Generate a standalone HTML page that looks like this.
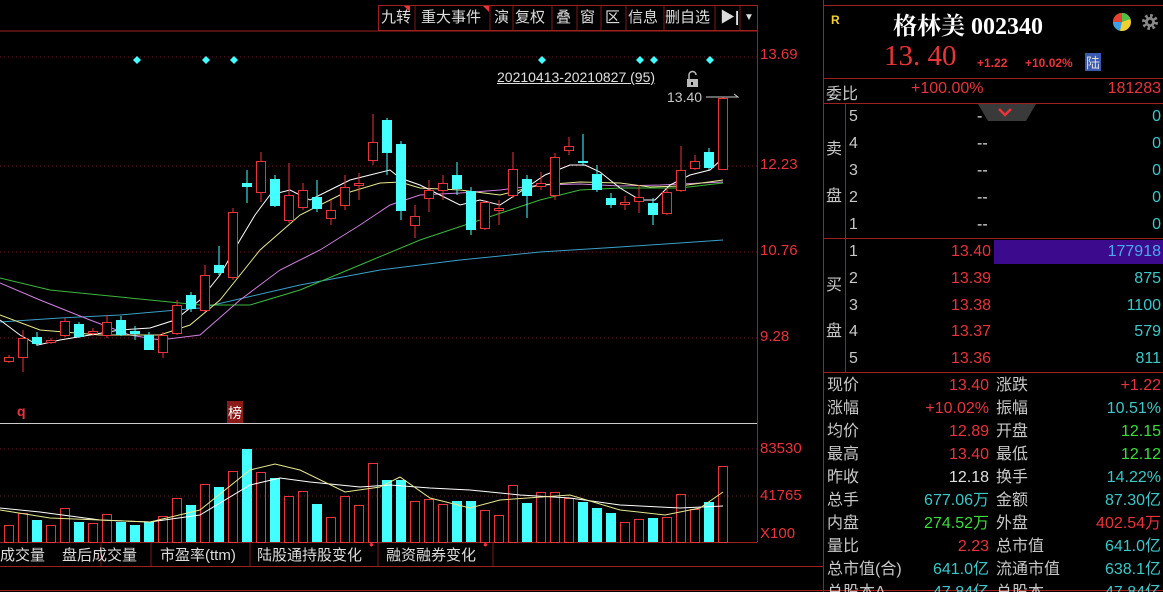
<!DOCTYPE html>
<html style="overflow:hidden;height:592px"><head><meta charset="utf-8">
<style>
html,body{overflow:hidden}
body{margin:0;width:1163px;height:592px;background:#000;overflow:hidden;position:relative;font-family:"Liberation Sans","Noto Sans CJK SC",sans-serif;}
.a{position:absolute;white-space:nowrap;}
.r{color:#e8343a}.c{color:#3cc8c8}.w{color:#e0e0e0}.g{color:#3ddc3d}.gr{color:#c8c8c8}
.tb{position:absolute;top:5px;height:25px;font-size:15px;color:#ddd;line-height:25px;}
</style></head><body>
<svg width="1163" height="592" style="position:absolute;left:0;top:0">
<line x1="0" y1="31" x2="757" y2="31" stroke="#a0201e"/>
<rect x="378.5" y="5.5" width="379" height="25" fill="none" stroke="#a0201e"/>
<g stroke="#7a1a18"><line x1="415" y1="6" x2="415" y2="30"/><line x1="490" y1="6" x2="490" y2="30"/><line x1="513" y1="6" x2="513" y2="30"/><line x1="552" y1="6" x2="552" y2="30"/><line x1="577" y1="6" x2="577" y2="30"/><line x1="601" y1="6" x2="601" y2="30"/><line x1="626" y1="6" x2="626" y2="30"/><line x1="664" y1="6" x2="664" y2="30"/><line x1="715" y1="6" x2="715" y2="30"/><line x1="740" y1="6" x2="740" y2="30"/></g>
<polygon points="404,6 410,6 410,12" fill="#e8343a"/><polygon points="483,6 489,6 489,12" fill="#e8343a"/>
<line x1="757.5" y1="31" x2="757.5" y2="542" stroke="#a0201e"/>
<g stroke="#6a1a18" stroke-dasharray="1,3"><line x1="0" y1="57" x2="757" y2="57"/><line x1="0" y1="166" x2="757" y2="166"/><line x1="0" y1="252" x2="757" y2="252"/><line x1="0" y1="338" x2="757" y2="338"/><line x1="0" y1="449" x2="757" y2="449"/><line x1="0" y1="496" x2="757" y2="496"/></g>
<line x1="0" y1="423.5" x2="757" y2="423.5" stroke="#ccc"/>
<line x1="0" y1="542.5" x2="757" y2="542.5" stroke="#a0201e"/>
<line x1="0" y1="566.5" x2="823" y2="566.5" stroke="#a0201e"/>
<line x1="0" y1="590.5" x2="1163" y2="590.5" stroke="#a0201e"/>
<line x1="823.5" y1="0" x2="823.5" y2="592" stroke="#a0201e"/>
<line x1="823" y1="5.5" x2="1163" y2="5.5" stroke="#a0201e"/>
<line x1="823" y1="78.5" x2="1163" y2="78.5" stroke="#a0201e"/>
<line x1="823" y1="103.5" x2="1163" y2="103.5" stroke="#a0201e"/>
<line x1="823" y1="238.5" x2="1163" y2="238.5" stroke="#a0201e"/>
<line x1="823" y1="372.5" x2="1163" y2="372.5" stroke="#a0201e"/>
<line x1="845.5" y1="103" x2="845.5" y2="372" stroke="#a0201e"/>
<g stroke="#7a1a18"><line x1="101" y1="543" x2="101" y2="566"/><line x1="151" y1="543" x2="151" y2="566"/><line x1="250" y1="543" x2="250" y2="566"/><line x1="378" y1="543" x2="378" y2="566"/><line x1="493" y1="543" x2="493" y2="566"/></g>
<rect x="994" y="240" width="169" height="24" fill="#3c0a8c"/>
<polygon points="978,104 1036,104 1026,121 988,121" fill="#3a3a3a"/>
<polyline points="999,109 1005,115 1011,109" fill="none" stroke="#e8343a" stroke-width="2.5"/>
<g fill="#4ff">
<polygon points="137,56 141,60 137,64 133,60"/><polygon points="206,56 210,60 206,64 202,60"/><polygon points="234,56 238,60 234,64 230,60"/><polygon points="542,56 546,60 542,64 538,60"/><polygon points="640,56 644,60 640,64 636,60"/><polygon points="654,56 658,60 654,64 650,60"/><polygon points="710,56 714,60 710,64 706,60"/></g>
<g fill="none" stroke-width="1">
<polyline stroke="#3aa0c8" points="0,322 60,318 120,315 200,308 300,285 380,270 460,260 540,252 620,247 680,243 723,240"/>
<polyline stroke="#3cb83c" points="0,278 50,290 100,295 150,300 200,305 250,305 300,290 360,265 420,240 480,220 540,200 580,190 620,188 680,188 723,183"/>
<polyline stroke="#d080e0" points="0,283 40,300 90,320 130,335 160,340 200,335 240,300 280,270 320,250 360,225 390,205 420,195 460,193 500,190 540,185 580,184 620,186 660,185 723,182"/>
<polyline stroke="#e8e890" points="0,315 40,330 100,335 160,335 190,325 220,300 260,250 300,215 340,195 380,183 400,182 420,188 460,190 500,195 540,185 580,182 620,183 650,187 680,186 723,180"/>
<polyline stroke="#fff" points="0,320 20,335 38,345 60,340 90,335 120,330 150,328 175,320 200,300 220,275 240,240 255,215 270,195 290,190 310,200 330,190 350,180 370,175 390,170 400,178 420,185 440,195 460,205 480,200 500,205 520,192 545,175 570,165 585,165 600,172 620,188 640,200 655,200 670,185 690,175 710,170 723,158"/>
</g>
<g stroke="#e8343a" fill="#000">
<line x1="9" y1="355" x2="9" y2="363"/><rect x="4.5" y="357.5" width="9" height="4"/>
<line x1="23" y1="330" x2="23" y2="372"/><rect x="18.5" y="338.5" width="9" height="19"/>
<line x1="51" y1="338" x2="51" y2="344"/><rect x="46.5" y="340.5" width="9" height="2"/>
<line x1="65" y1="318" x2="65" y2="337"/><rect x="60.5" y="321.5" width="9" height="14"/>
<line x1="93" y1="328" x2="93" y2="336"/><rect x="88.5" y="331.5" width="9" height="2"/>
<line x1="107" y1="315" x2="107" y2="338"/><rect x="102.5" y="322.5" width="9" height="13"/>
<line x1="163" y1="332" x2="163" y2="358"/><rect x="158.5" y="335.5" width="9" height="17"/>
<line x1="177" y1="300" x2="177" y2="335"/><rect x="172.5" y="305.5" width="9" height="28"/>
<line x1="205" y1="265" x2="205" y2="312"/><rect x="200.5" y="275.5" width="9" height="35"/>
<line x1="233" y1="208" x2="233" y2="280"/><rect x="228.5" y="212.5" width="9" height="65"/>
<line x1="261" y1="152" x2="261" y2="202"/><rect x="256.5" y="161.5" width="9" height="31"/>
<line x1="289" y1="163" x2="289" y2="223"/><rect x="284.5" y="195.5" width="9" height="25"/>
<line x1="303" y1="183" x2="303" y2="210"/><rect x="298.5" y="190.5" width="9" height="17"/>
<line x1="331" y1="200" x2="331" y2="225"/><rect x="326.5" y="210.5" width="9" height="8"/>
<line x1="345" y1="175" x2="345" y2="210"/><rect x="340.5" y="187.5" width="9" height="18"/>
<line x1="359" y1="173" x2="359" y2="200"/><rect x="354.5" y="183.5" width="9" height="2"/>
<line x1="373" y1="114" x2="373" y2="165"/><rect x="368.5" y="142.5" width="9" height="18"/>
<line x1="415" y1="205" x2="415" y2="238"/><rect x="410.5" y="216.5" width="9" height="9"/>
<line x1="429" y1="180" x2="429" y2="212"/><rect x="424.5" y="190.5" width="9" height="8"/>
<line x1="443" y1="175" x2="443" y2="200"/><rect x="438.5" y="183.5" width="9" height="7"/>
<line x1="485" y1="200" x2="485" y2="230"/><rect x="480.5" y="202.5" width="9" height="26"/>
<line x1="499" y1="200" x2="499" y2="225"/><rect x="494.5" y="208.5" width="9" height="2"/>
<line x1="513" y1="152" x2="513" y2="198"/><rect x="508.5" y="169.5" width="9" height="26"/>
<line x1="541" y1="172" x2="541" y2="190"/><rect x="536.5" y="183.5" width="9" height="3"/>
<line x1="555" y1="153" x2="555" y2="200"/><rect x="550.5" y="157.5" width="9" height="38"/>
<line x1="569" y1="137" x2="569" y2="155"/><rect x="564.5" y="146.5" width="9" height="4"/>
<line x1="625" y1="196" x2="625" y2="210"/><rect x="620.5" y="202.5" width="9" height="2"/>
<line x1="639" y1="185" x2="639" y2="213"/><rect x="634.5" y="197.5" width="9" height="4"/>
<line x1="667" y1="188" x2="667" y2="215"/><rect x="662.5" y="192.5" width="9" height="21"/>
<line x1="681" y1="146" x2="681" y2="192"/><rect x="676.5" y="170.5" width="9" height="20"/>
<line x1="695" y1="155" x2="695" y2="170"/><rect x="690.5" y="161.5" width="9" height="7"/>
<line x1="723" y1="97" x2="723" y2="170"/><rect x="718.5" y="98.5" width="9" height="71"/>
</g>
<g stroke="#4ff" fill="#4ff">
<line x1="37" y1="332" x2="37" y2="346"/><rect x="32.5" y="337.5" width="9" height="6"/>
<line x1="79" y1="322" x2="79" y2="338"/><rect x="74.5" y="324.5" width="9" height="12"/>
<line x1="121" y1="316" x2="121" y2="336"/><rect x="116.5" y="320.5" width="9" height="14"/>
<line x1="135" y1="326" x2="135" y2="340"/><rect x="130.5" y="331.5" width="9" height="2"/>
<line x1="149" y1="332" x2="149" y2="350"/><rect x="144.5" y="335.5" width="9" height="14"/>
<line x1="191" y1="292" x2="191" y2="312"/><rect x="186.5" y="295.5" width="9" height="13"/>
<line x1="219" y1="246" x2="219" y2="275"/><rect x="214.5" y="265.5" width="9" height="7"/>
<line x1="247" y1="170" x2="247" y2="203"/><rect x="242.5" y="183.5" width="9" height="3"/>
<line x1="275" y1="175" x2="275" y2="207"/><rect x="270.5" y="179.5" width="9" height="26"/>
<line x1="317" y1="180" x2="317" y2="212"/><rect x="312.5" y="197.5" width="9" height="11"/>
<line x1="387" y1="118" x2="387" y2="175"/><rect x="382.5" y="120.5" width="9" height="32"/>
<line x1="401" y1="141" x2="401" y2="220"/><rect x="396.5" y="144.5" width="9" height="66"/>
<line x1="457" y1="162" x2="457" y2="195"/><rect x="452.5" y="175.5" width="9" height="13"/>
<line x1="471" y1="187" x2="471" y2="235"/><rect x="466.5" y="191.5" width="9" height="38"/>
<line x1="527" y1="175" x2="527" y2="218"/><rect x="522.5" y="179.5" width="9" height="16"/>
<line x1="583" y1="134" x2="583" y2="166"/><rect x="578.5" y="161.5" width="9" height="1"/>
<line x1="597" y1="165" x2="597" y2="192"/><rect x="592.5" y="174.5" width="9" height="15"/>
<line x1="611" y1="193" x2="611" y2="208"/><rect x="606.5" y="198.5" width="9" height="6"/>
<line x1="653" y1="198" x2="653" y2="225"/><rect x="648.5" y="203.5" width="9" height="11"/>
<line x1="709" y1="148" x2="709" y2="170"/><rect x="704.5" y="152.5" width="9" height="15"/>
</g>
<polyline points="706,97 738,97 734,94" fill="none" stroke="#ccc"/>
<rect x="687" y="79" width="11" height="8" fill="#bbb"/>
<path d="M689,79 V75 A3.5,3.5 0 0,1 696,75" fill="none" stroke="#bbb" stroke-width="1.5"/>
<rect x="691" y="82" width="2" height="3" fill="#000"/>
<g stroke="#e8343a" fill="none">
<rect x="4.5" y="525.5" width="9" height="17"/><rect x="18.5" y="513.5" width="9" height="29"/><rect x="46.5" y="525.5" width="9" height="17"/><rect x="60.5" y="508.5" width="9" height="34"/><rect x="88.5" y="523.5" width="9" height="19"/><rect x="102.5" y="514.5" width="9" height="28"/><rect x="158.5" y="516.5" width="9" height="26"/><rect x="172.5" y="498.5" width="9" height="44"/><rect x="200.5" y="484.5" width="9" height="58"/><rect x="228.5" y="471.5" width="9" height="71"/><rect x="256.5" y="472.5" width="9" height="70"/><rect x="284.5" y="496.5" width="9" height="46"/><rect x="298.5" y="491.5" width="9" height="51"/><rect x="326.5" y="517.5" width="9" height="25"/><rect x="340.5" y="496.5" width="9" height="46"/><rect x="354.5" y="505.5" width="9" height="37"/><rect x="368.5" y="463.5" width="9" height="79"/><rect x="410.5" y="501.5" width="9" height="41"/><rect x="424.5" y="499.5" width="9" height="43"/><rect x="438.5" y="504.5" width="9" height="38"/><rect x="480.5" y="510.5" width="9" height="32"/><rect x="494.5" y="515.5" width="9" height="27"/><rect x="508.5" y="485.5" width="9" height="57"/><rect x="536.5" y="492.5" width="9" height="50"/><rect x="550.5" y="492.5" width="9" height="50"/><rect x="564.5" y="498.5" width="9" height="44"/><rect x="620.5" y="522.5" width="9" height="20"/><rect x="634.5" y="519.5" width="9" height="23"/><rect x="662.5" y="517.5" width="9" height="25"/><rect x="676.5" y="494.5" width="9" height="48"/><rect x="690.5" y="509.5" width="9" height="33"/><rect x="718.5" y="466.5" width="9" height="76"/>
</g>
<g fill="#4ff">
<rect x="32" y="520" width="10" height="22"/><rect x="74" y="522" width="10" height="20"/><rect x="116" y="522" width="10" height="20"/><rect x="130" y="525" width="10" height="17"/><rect x="144" y="522" width="10" height="20"/><rect x="186" y="505" width="10" height="37"/><rect x="214" y="487" width="10" height="55"/><rect x="242" y="449" width="10" height="93"/><rect x="270" y="478" width="10" height="64"/><rect x="312" y="504" width="10" height="38"/><rect x="382" y="480" width="10" height="62"/><rect x="396" y="480" width="10" height="62"/><rect x="452" y="501" width="10" height="41"/><rect x="466" y="501" width="10" height="41"/><rect x="522" y="503" width="10" height="39"/><rect x="578" y="502" width="10" height="40"/><rect x="592" y="508" width="10" height="34"/><rect x="606" y="513" width="10" height="29"/><rect x="648" y="518" width="10" height="24"/><rect x="704" y="502" width="10" height="40"/>
</g>
<g fill="none">
<polyline stroke="#fff" points="0,508 40,512 100,520 150,522 200,515 250,485 280,478 310,482 360,487 390,485 430,488 470,490 520,495 570,498 620,505 680,508 723,506"/>
<polyline stroke="#e8e890" points="0,510 50,518 150,522 200,510 250,470 275,464 300,470 345,492 380,487 400,477 430,498 470,508 500,500 570,495 620,510 665,515 700,508 723,492"/>
</g>
<rect x="227" y="401" width="16" height="22" fill="#8a1a18"/>
<circle cx="1122" cy="22" r="9" fill="#f0d030"/>
<path d="M1122,22 L1122,13 A9,9 0 0,0 1113,22 Z" fill="#e84030"/>
<path d="M1122,22 L1113,22 A9,9 0 0,0 1120,30.8 Z" fill="#3aa0e8"/>
<path d="M1122,22 L1122,13 A9,9 0 0,1 1130.5,19 Z" fill="#50c040"/>
<circle cx="1150" cy="22" r="6" fill="none" stroke="#888" stroke-width="4" stroke-dasharray="2.4,2.3"/>
<circle cx="1150" cy="22" r="5" fill="#888"/><circle cx="1150" cy="22" r="2.2" fill="#000"/>
<rect x="1085" y="53" width="16" height="18" fill="#3a5ab0"/>
</svg>
<div class="tb" style="left:381px">九转</div>
<div class="tb" style="left:421px">重大事件</div>
<div class="tb" style="left:494px">演</div>
<div class="tb" style="left:515px">复权</div>
<div class="tb" style="left:556px">叠</div>
<div class="tb" style="left:580px">窗</div>
<div class="tb" style="left:605px">区</div>
<div class="tb" style="left:628px">信息</div>
<div class="tb" style="left:665px">删自选</div>
<div class="tb" style="left:720px;font-weight:bold">▶|</div>
<div class="tb" style="left:744px;font-size:10px">▼</div>
<div class="a r" style="left:760px;top:46px;font-size:15px">13.69</div>
<div class="a r" style="left:760px;top:156px;font-size:15px">12.23</div>
<div class="a r" style="left:760px;top:242px;font-size:15px">10.76</div>
<div class="a r" style="left:760px;top:328px;font-size:15px">9.28</div>
<div class="a r" style="left:760px;top:440px;font-size:15px">83530</div>
<div class="a r" style="left:760px;top:487px;font-size:15px">41765</div>
<div class="a r" style="left:760px;top:525px;font-size:15px">X100</div>
<div class="a w" style="left:497px;top:69px;font-size:14px;text-decoration:underline">20210413-20210827 (95)</div>
<div class="a gr" style="left:667px;top:89px;font-size:14px">13.40</div>
<div class="a r" style="left:17px;top:403px;font-size:14px;font-weight:bold">q</div>
<div class="a" style="left:228px;top:403px;font-size:14px;color:#fff">榜</div>
<div class="a" style="left:0;top:544px;font-size:15px;color:#ddd">成交量</div>
<div class="a" style="left:62px;top:544px;font-size:15px;color:#ddd">盘后成交量</div>
<div class="a" style="left:160px;top:544px;font-size:15px;color:#ddd">市盈率(ttm)</div>
<div class="a" style="left:257px;top:544px;font-size:15px;color:#ddd">陆股通持股变化</div>
<div class="a" style="left:386px;top:544px;font-size:15px;color:#ddd">融资融券变化</div>
<div class="a r" style="left:369px;top:540px;font-size:8px">●</div>
<div class="a r" style="left:483px;top:540px;font-size:8px">●</div>
<div class="a" style="left:831px;top:13px;font-size:12px;color:#f0d030;font-weight:bold">R</div>
<div class="a" style="left:893px;top:6px;font-size:24px;color:#fff;font-family:'Liberation Serif','Noto Serif CJK SC',serif;font-weight:bold">格林美 002340</div>
<div class="a r" style="left:884px;top:40px;font-size:29px;font-family:'Liberation Serif',serif">13. 40</div>
<div class="a r" style="left:977px;top:56px;font-size:12px;font-weight:bold">+1.22</div>
<div class="a r" style="left:1025px;top:56px;font-size:12px;font-weight:bold">+10.02%</div>
<div class="a" style="left:1086px;top:53px;font-size:14px;color:#ddd">陆</div>
<div class="a gr" style="left:826px;top:80px;font-size:16px">委比</div>
<div class="a r" style="left:911px;top:80px;font-size:16px">+100.00%</div>
<div class="a r" style="right:2px;top:80px;font-size:16px">181283</div>
<div class="a gr" style="left:826px;top:135px;font-size:16px">卖</div>
<div class="a gr" style="left:826px;top:182px;font-size:16px">盘</div>
<div class="a gr" style="left:826px;top:271px;font-size:16px">买</div>
<div class="a gr" style="left:826px;top:317px;font-size:16px">盘</div>
<div style="position:absolute;left:849px;top:103px;width:312px;font-size:16px;line-height:27px">
<div style="position:relative;height:27px"><span class="gr">5</span><span class="a w" style="left:128px">-</span><span class="a c" style="right:0">0</span></div>
<div style="position:relative;height:27px"><span class="gr">4</span><span class="a w" style="left:128px">--</span><span class="a c" style="right:0">0</span></div>
<div style="position:relative;height:27px"><span class="gr">3</span><span class="a w" style="left:128px">--</span><span class="a c" style="right:0">0</span></div>
<div style="position:relative;height:27px"><span class="gr">2</span><span class="a w" style="left:128px">--</span><span class="a c" style="right:0">0</span></div>
<div style="position:relative;height:27px"><span class="gr">1</span><span class="a w" style="left:128px">--</span><span class="a c" style="right:0">0</span></div>
</div>
<div style="position:absolute;left:849px;top:239px;width:312px;font-size:16px;line-height:26.8px">
<div style="position:relative;height:26.8px"><span class="gr">1</span><span class="a r" style="right:170px">13.40</span><span class="a" style="right:0;color:#4aa8f0">177918</span></div>
<div style="position:relative;height:26.8px"><span class="gr">2</span><span class="a r" style="right:170px">13.39</span><span class="a c" style="right:0">875</span></div>
<div style="position:relative;height:26.8px"><span class="gr">3</span><span class="a r" style="right:170px">13.38</span><span class="a c" style="right:0">1100</span></div>
<div style="position:relative;height:26.8px"><span class="gr">4</span><span class="a r" style="right:170px">13.37</span><span class="a c" style="right:0">579</span></div>
<div style="position:relative;height:26.8px"><span class="gr">5</span><span class="a r" style="right:170px">13.36</span><span class="a c" style="right:0">811</span></div>
</div>
<div style="position:absolute;left:827px;top:374px;width:334px;height:218px;overflow:hidden;font-size:16px;line-height:23px">
<div style="position:relative;height:23px"><span class="gr">现价</span><span class="a r" style="right:172px">13.40</span><span class="a gr" style="left:169px">涨跌</span><span class="a r" style="right:0">+1.22</span></div>
<div style="position:relative;height:23px"><span class="gr">涨幅</span><span class="a r" style="right:172px">+10.02%</span><span class="a gr" style="left:169px">振幅</span><span class="a c" style="right:0">10.51%</span></div>
<div style="position:relative;height:23px"><span class="gr">均价</span><span class="a r" style="right:172px">12.89</span><span class="a gr" style="left:169px">开盘</span><span class="a g" style="right:0">12.15</span></div>
<div style="position:relative;height:23px"><span class="gr">最高</span><span class="a r" style="right:172px">13.40</span><span class="a gr" style="left:169px">最低</span><span class="a g" style="right:0">12.12</span></div>
<div style="position:relative;height:23px"><span class="gr">昨收</span><span class="a w" style="right:172px">12.18</span><span class="a gr" style="left:169px">换手</span><span class="a c" style="right:0">14.22%</span></div>
<div style="position:relative;height:23px"><span class="gr">总手</span><span class="a c" style="right:172px">677.06万</span><span class="a gr" style="left:169px">金额</span><span class="a c" style="right:0">87.30亿</span></div>
<div style="position:relative;height:23px"><span class="gr">内盘</span><span class="a g" style="right:172px">274.52万</span><span class="a gr" style="left:169px">外盘</span><span class="a r" style="right:0">402.54万</span></div>
<div style="position:relative;height:23px"><span class="gr">量比</span><span class="a r" style="right:172px">2.23</span><span class="a gr" style="left:169px">总市值</span><span class="a c" style="right:0">641.0亿</span></div>
<div style="position:relative;height:23px"><span class="gr">总市值(合)</span><span class="a c" style="right:172px">641.0亿</span><span class="a gr" style="left:169px">流通市值</span><span class="a c" style="right:0">638.1亿</span></div>
<div style="position:relative;height:23px"><span class="gr">总股本A</span><span class="a c" style="right:172px">47.84亿</span><span class="a gr" style="left:169px">总股本</span><span class="a c" style="right:0">47.84亿</span></div>
</div>
</body></html>
